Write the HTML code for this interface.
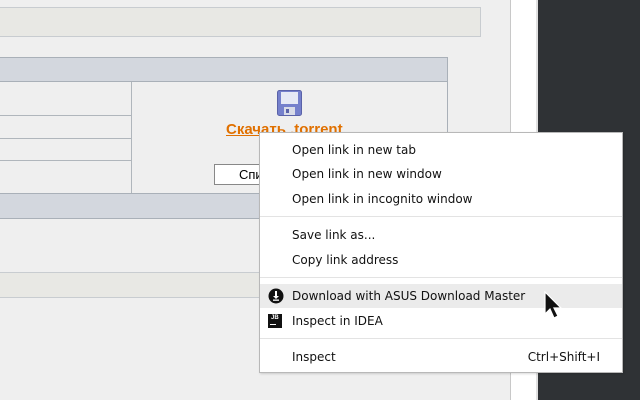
<!DOCTYPE html>
<html><head><meta charset="utf-8"><style>
*{margin:0;padding:0;box-sizing:border-box}
body{width:640px;height:400px;overflow:hidden;background:#efefef;position:relative;font-family:"DejaVu Sans","Liberation Sans",sans-serif}
.a{position:absolute}
.mi{position:absolute;left:0;right:0;height:24px;line-height:25px;padding-left:32px;font-size:12px;color:#111}
.sep{position:absolute;left:0;right:0;height:1px;background:#e3e3e3}
</style></head><body>
<div class="a" style="left:0;top:7px;width:481px;height:30px;background:#e8e8e4;border:1px solid #c8ccd0;border-left:none"></div>
<div class="a" style="left:510px;top:0;width:1px;height:400px;background:#c8c8c8"></div>
<div class="a" style="left:511px;top:0;width:25px;height:400px;background:#fff"></div>
<div class="a" style="left:536px;top:0;width:2px;height:400px;background:#e0e0e0"></div>
<div class="a" style="left:538px;top:0;width:102px;height:400px;background:#2f3235"></div>

<div class="a" style="left:0;top:57px;width:448px;height:162px;border:1px solid #a9b0b8;border-left:none;background:#efefef"></div>
<div class="a" style="left:0;top:58px;width:447px;height:24px;background:#d3d7de;border-bottom:1px solid #a9b0b8"></div>
<div class="a" style="left:131px;top:82px;width:1px;height:111px;background:#b0b6bc"></div>
<div class="a" style="left:0;top:115px;width:131px;height:1px;background:#b0b6bc"></div>
<div class="a" style="left:0;top:138px;width:131px;height:1px;background:#b0b6bc"></div>
<div class="a" style="left:0;top:160px;width:131px;height:1px;background:#b0b6bc"></div>
<div class="a" style="left:0;top:193px;width:447px;height:25px;background:#d3d7de;border-top:1px solid #a9b0b8"></div>
<div class="a" style="left:0;top:272px;width:448px;height:26px;background:#e8e8e4;border:1px solid #c8ccd0;border-left:none"></div>

<svg class="a" style="left:277px;top:90px" width="25" height="26" viewBox="0 0 25 26">
<rect x="0.5" y="0.5" width="24" height="25" rx="2" fill="#7580cc" stroke="#5a62a8"/>
<rect x="4" y="2" width="17" height="12" fill="#e6e9f5"/>
<rect x="7" y="17" width="11" height="8" fill="#d8dbe8"/>
<rect x="9" y="19" width="3" height="4" fill="#5a62a8"/>
</svg>
<div class="a" style="left:226px;top:121px;font-family:'Liberation Sans',sans-serif;font-size:15px;font-weight:bold;color:#e07000;text-decoration:underline">Скачать .torrent</div>
<div class="a" style="left:214px;top:164px;width:80px;height:21px;background:#fff;border:1px solid #888;font-family:'Liberation Sans',sans-serif;font-size:13px;line-height:19px;padding-left:24px">Спи</div>

<div class="a" style="left:259px;top:132px;width:364px;height:241px;background:#fff;border:1px solid #b8b8b8;box-shadow:1px 1px 2px rgba(0,0,0,.15)">
<div class="mi" style="top:5px">Open link in new tab</div>
<div class="mi" style="top:29px">Open link in new window</div>
<div class="mi" style="top:54px">Open link in incognito window</div>
<div class="sep" style="top:83px"></div>
<div class="mi" style="top:90px">Save link as...</div>
<div class="mi" style="top:115px">Copy link address</div>
<div class="sep" style="top:144px"></div>
<div class="mi" style="top:151px;background:#ebebeb">Download with ASUS Download Master</div>
<svg class="a" style="left:8px;top:155px" width="16" height="16" viewBox="0 0 16 16"><circle cx="8" cy="8" r="7.5" fill="#111"/><rect x="7" y="3" width="2" height="6" fill="#fff"/><path d="M5 8 L8 11 L11 8Z" fill="#fff"/><rect x="5" y="11.5" width="6" height="1.3" fill="#fff"/></svg>
<div class="mi" style="top:176px">Inspect in IDEA</div>
<div class="a" style="left:8px;top:181px;width:14px;height:14px;background:#111;color:#fff;font-size:6px;font-weight:bold;line-height:8px;padding-left:3px;font-family:'Liberation Sans',sans-serif">JB<div style="position:absolute;left:2px;top:10px;width:6px;height:1px;background:#fff"></div></div>
<div class="sep" style="top:205px"></div>
<div class="mi" style="top:212px">Inspect<span style="position:absolute;right:22px">Ctrl+Shift+I</span></div>
</div>
<svg class="a" style="left:544px;top:291px" width="20" height="30" viewBox="0 0 20 30"><path d="M1 1 L1 23 L6 18 L10 27 L14 25 L10 17 L17 17 Z" fill="#111" stroke="#fff" stroke-width="1.2"/></svg>
</body></html>
